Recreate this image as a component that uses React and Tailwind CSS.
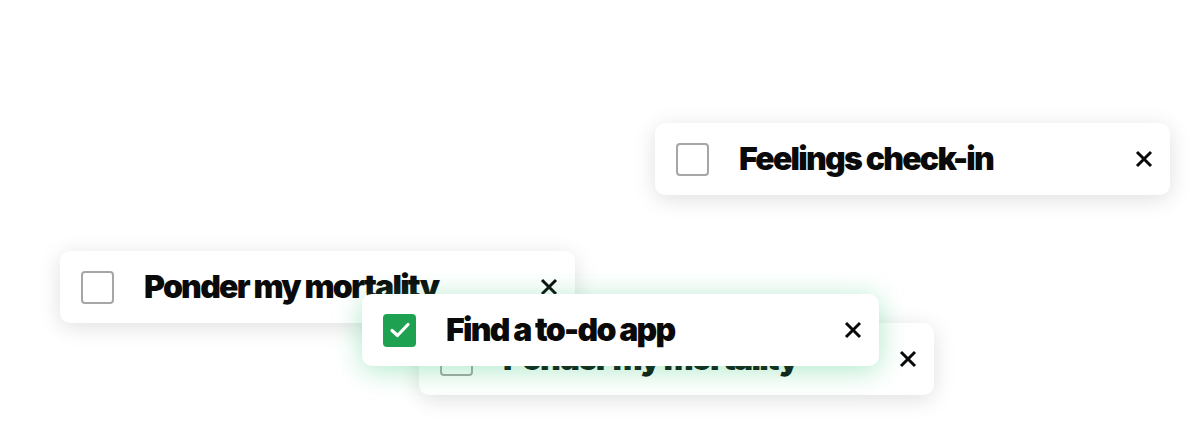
import { memo } from 'react';

const CloseIcon = () => (
  <svg width="18" height="18" viewBox="0 0 18 18" fill="none" stroke="#0a0a0a" strokeWidth="3" strokeLinecap="butt">
    <path d="M2 2L16 16M16 2L2 16" />
  </svg>
);

const TodoCard = memo(function TodoCard({ label, done, className }) {
  return (
    <div
      className={`absolute flex items-center h-[72px] rounded-[10px] bg-white pl-[21px] pr-[17px] ${
        done
          ? 'shadow-[0_4px_28px_rgba(52,199,120,0.4)]'
          : 'shadow-[0_4px_22px_rgba(0,0,0,0.13)]'
      } ${className}`}
    >
      {done ? (
        <div className="flex items-center justify-center w-[33px] h-[33px] rounded-[4px] bg-[#1fa152]">
          <svg width="24" height="24" viewBox="0 0 24 24" fill="none" stroke="white" strokeWidth="3.2" strokeLinecap="round" strokeLinejoin="round">
            <path d="M4 12.5L9.5 17.5L20 6.5" />
          </svg>
        </div>
      ) : (
        <div className="w-[33px] h-[33px] rounded-[4px] border-2 border-[#a6a6a6] bg-white" />
      )}
      <span className="ml-[30px] flex-1 text-[32px] font-black tracking-[-0.055em] text-[#0a0a0a] leading-none font-['Inter',sans-serif]">
        {label}
      </span>
      <CloseIcon />
    </div>
  );
});

export default function App() {
  return (
    <div className="relative w-[1200px] h-[425px] bg-white overflow-hidden">
      <TodoCard label="Feelings check-in" className="left-[655px] top-[123px] w-[515px]" />
      <TodoCard label="Ponder my mortality" className="left-[60px] top-[251px] w-[515px]" />
      <TodoCard label="Ponder my mortality" className="left-[419px] top-[323px] w-[515px]" />
      <TodoCard label="Find a to-do app" done className="left-[362px] top-[294px] w-[517px]" />
    </div>
  );
}
